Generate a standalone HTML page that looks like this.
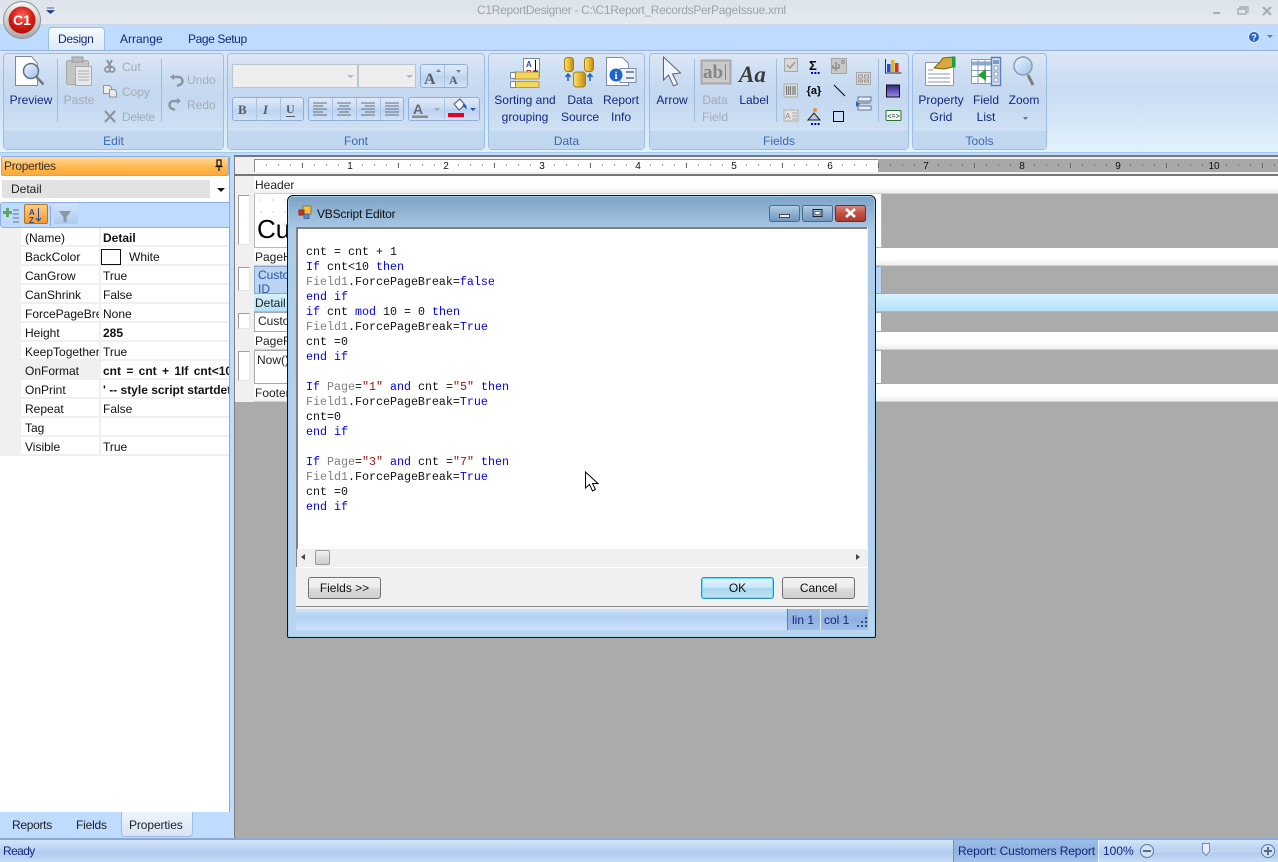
<!DOCTYPE html>
<html><head><meta charset="utf-8"><title>C1ReportDesigner</title>
<style>
html,body{margin:0;padding:0;width:1278px;height:862px;overflow:hidden;background:#ababab}
body{position:relative;font:12px/14px "Liberation Sans",sans-serif;color:#111}
div,svg,pre,span.a{box-sizing:border-box}
.b{position:absolute}
.t{position:absolute;white-space:nowrap;line-height:14px}
.c{position:absolute;white-space:nowrap;width:100px;text-align:center;line-height:14px;color:#15287a}
.d{color:#a3abb8}
.g{position:absolute;top:53px;height:97px;border:1px solid #9dbde4;border-radius:4px;background:linear-gradient(#dbe7f6 0,#cfdff3 18%,#c3d7f0 45%,#cfe0f3 80%)}
.g i{position:absolute;left:0;right:0;bottom:0;height:18px;background:#c0d7ef;color:#3f68ad;font-style:normal;text-align:center;line-height:20px}
.btn{position:absolute;border:1px solid #8eaed8;border-radius:3px;background:linear-gradient(#dfeafa,#c9dcf3 45%,#bcd2ee 55%,#d2e2f6)}
.sep{position:absolute;width:1px;background:#9fbbdd}
.row{position:absolute;left:0;width:229px;height:19px;border-bottom:2px solid #f0f0f0;background:#fff}
.row b,.row span{position:absolute;top:3px;white-space:nowrap;line-height:14px;font-weight:normal;color:#111}
.row .k{left:25px;width:74px;overflow:hidden}
.row .v{left:103px;width:126px;overflow:hidden}
.row b.v{font-weight:bold}
.row:before{content:"";position:absolute;left:0;top:0;width:21px;height:19px;background:#f0f0f0}
.row:after{content:"";position:absolute;left:99px;top:0;width:2px;height:19px;background:#f0f0f0}
.band{position:absolute;left:254px;right:0;height:18px;background:linear-gradient(#fff,#fff 60%,#efefef);border-bottom:1px solid #d0d0d0}
.band span{position:absolute;left:1px;top:2px;line-height:14px;color:#222}
.lb{position:absolute;left:238px;width:12px;background:#fff;border:1px solid #a0a0a0;border-right-color:#e8e8e8;border-bottom-color:#e8e8e8}
pre{position:absolute;margin:0;font:11.67px/15px "Liberation Mono",monospace;color:#111}
pre u{text-decoration:none;color:#0000ee}
pre s{text-decoration:none;color:#808080}
pre em{font-style:normal;color:#a31515}
.wb{position:absolute;top:577px;height:22px;width:73px;border:1px solid #707070;border-radius:3px;background:linear-gradient(#f4f4f4,#ebebeb 48%,#dcdcdc 52%,#cfcfcf);text-align:center;line-height:20px;color:#111}
</style></head><body>

<!-- title bar -->
<div class="b" style="left:0;top:0;width:1278px;height:25px;background:linear-gradient(#dde3ea,#e5eaf1);border-bottom:1px solid #cdd6e2"></div>
<div class="t" style="left:477px;top:3px;color:#9da3ac;letter-spacing:-.31px">C1ReportDesigner - C:\C1Report_RecordsPerPageIssue.xml</div>
<!-- tab row -->
<div class="b" style="left:0;top:25px;width:1278px;height:26px;background:#bfdbff"></div>
<div class="b" style="left:48px;top:27px;width:57px;height:24px;border:1px solid #9dbde4;border-bottom:0;border-radius:4px 4px 0 0;background:linear-gradient(#f7fbff,#dbe8f8)"></div>
<div class="t" style="left:58px;top:32px;color:#15287a;letter-spacing:-.3px">Design</div>
<div class="t" style="left:120px;top:32px;color:#15287a">Arrange</div>
<div class="t" style="left:188px;top:32px;color:#15287a;letter-spacing:-.4px">Page Setup</div>
<!-- ribbon -->
<div class="b" style="left:0;top:50px;width:1278px;height:103px;border-top:1px solid #8fb2e0;border-bottom:1px solid #a8c8e8;background:linear-gradient(#dbe7f7,#c9dcf3 35%,#cfe1f5 55%,#e2f2fd)"></div>
<div class="b" style="left:0;top:153px;width:1278px;height:3px;background:#bfdbff"></div>

<div class="g" style="left:3px;width:221px"><i>Edit</i></div>
<div class="g" style="left:227px;width:258px"><i>Font</i></div>
<div class="g" style="left:488px;width:157px"><i>Data</i></div>
<div class="g" style="left:649px;width:260px"><i>Fields</i></div>
<div class="g" style="left:912px;width:135px"><i>Tools</i></div>

<div class="sep" style="left:57px;top:59px;height:63px"></div>
<div class="sep" style="left:161px;top:59px;height:63px"></div>
<div class="sep" style="left:694px;top:59px;height:63px"></div>
<div class="sep" style="left:776px;top:59px;height:63px"></div>
<div class="sep" style="left:878px;top:59px;height:63px"></div>

<!-- font controls -->
<div class="b" style="left:232px;top:64px;width:126px;height:24px;background:#eeeeee;border:1px solid #bcc4cf"></div>
<div class="b" style="left:358px;top:64px;width:58px;height:24px;background:#eeeeee;border:1px solid #bcc4cf"></div>
<div class="btn" style="left:420px;top:64px;width:48px;height:24px"></div>
<div class="btn" style="left:232px;top:97px;width:72px;height:24px"></div>
<div class="btn" style="left:308px;top:97px;width:96px;height:24px"></div>
<div class="btn" style="left:408px;top:97px;width:72px;height:24px"></div>

<svg class="b" style="left:0;top:0" width="1278" height="156" viewBox="0 0 1278 156">
<defs>
<radialGradient id="rb" cx=".5" cy=".35" r=".7"><stop offset="0" stop-color="#f26a60"/><stop offset=".55" stop-color="#d91d14"/><stop offset="1" stop-color="#a30b08"/></radialGradient>
<linearGradient id="sil" x1="0" y1="0" x2="0" y2="1"><stop offset="0" stop-color="#f7f7f7"/><stop offset="1" stop-color="#a8a8ac"/></linearGradient>
<linearGradient id="gold" x1="0" y1="0" x2="1" y2="0"><stop offset="0" stop-color="#fbe27a"/><stop offset=".5" stop-color="#e8b92e"/><stop offset="1" stop-color="#b98616"/></linearGradient>
<linearGradient id="lens" x1="0" y1="0" x2="1" y2="1"><stop offset="0" stop-color="#eef6ff"/><stop offset="1" stop-color="#9cc0ea"/></linearGradient>
<linearGradient id="vio" x1="0" y1="0" x2="0" y2="1"><stop offset="0" stop-color="#2a2a78"/><stop offset=".55" stop-color="#6a5ac0"/><stop offset="1" stop-color="#a08ae0"/></linearGradient>
</defs>
<!-- app button -->
<circle cx="22" cy="20" r="18.5" fill="url(#sil)" stroke="#8d8f94"/>
<circle cx="22" cy="20" r="13.500" fill="url(#rb)"/>
<text x="22" y="25" font-family="Liberation Sans" font-weight="bold" font-size="14" fill="#fff" text-anchor="middle">C1</text>
<path d="M47 8h7M47 10.5h7l-3.500 3z" fill="#1f3f8a" stroke="#1f3f8a" stroke-width=".8"/>
<!-- window buttons -->
<path d="M1213 13h7" stroke="#a5adb8" stroke-width="2"/>
<path d="M1238 9h8v5h-8zM1240 9V7h8v5h-2" fill="none" stroke="#a5adb8" stroke-width="1.400"/>
<path d="M1263 7l8 8M1271 7l-8 8" stroke="#a5adb8" stroke-width="2.200"/>
<!-- help -->
<circle cx="1254" cy="37" r="5.500" fill="#2a62c8" stroke="#dfeaff"/><text x="1254" y="40.500" font-family="Liberation Sans" font-weight="bold" font-size="9" fill="#fff" text-anchor="middle">?</text>
<path d="M1267 35h6l-3 3z" fill="#5b7fb8"/>

<!-- preview -->
<path d="M15.500 56.500h16l6 7v22h-22z" fill="#fff" stroke="#7c8ba6"/>
<circle cx="31" cy="71" r="7.500" fill="url(#lens)" stroke="#66707f" stroke-width="1.500"/>
<path d="M36.500 77l7 7.500" stroke="#777" stroke-width="2.500"/>
<!-- paste -->
<rect x="66.500" y="60.500" width="22" height="24" rx="2" fill="#c4c4c4" stroke="#a8a8a8"/>
<rect x="72" y="57" width="11" height="5" fill="#bbb" stroke="#9d9d9d"/>
<path d="M75.500 66.500h16v19h-16z" fill="#e8e8e8" stroke="#aaa"/>
<path d="M78 71h11M78 74h11M78 77h11M78 80h11" stroke="#aaa"/>
<!-- cut copy delete -->
<path d="M107 60l4 7M112 60l-4 7" stroke="#8d949e" stroke-width="2"/><circle cx="107.500" cy="69.500" r="2.500" fill="none" stroke="#8d949e" stroke-width="1.800"/><circle cx="112" cy="69.500" r="2.500" fill="none" stroke="#8d949e" stroke-width="1.800"/>
<path d="M103.500 85.500h6l2 2v6h-8z" fill="#eee" stroke="#8d949e"/><path d="M109.500 89.500h5l2 2v5.500h-7z" fill="#e8e8e8" stroke="#8d949e"/>
<path d="M105 111l10 11M115 111l-10 11" stroke="#8d949e" stroke-width="2.200"/>
<!-- undo redo -->
<path d="M172 77h6a4 4 0 0 1 1 8l-2 1" fill="none" stroke="#8d949e" stroke-width="2.400"/><path d="M170 77l4-3v6z" fill="#8d949e"/>
<path d="M179 101h-5a4 4 0 0 0-1 8l2 1" fill="none" stroke="#8d949e" stroke-width="2.400"/><path d="M181 101l-4-3v6z" fill="#8d949e"/>
<!-- combos arrows -->
<path d="M347 75h7l-3.500 3zM406 75h7l-3.500 3z" fill="#b4b8be"/>
<!-- grow/shrink font, b i u -->
<text x="424" y="84" font-family="Liberation Serif" font-weight="bold" font-size="16" fill="#566070">A</text><path d="M436 72h5l-2.500-3z" fill="#7a8494"/>
<text x="449" y="84" font-family="Liberation Serif" font-weight="bold" font-size="12" fill="#566070">A</text><path d="M456 70h5l-2.500 3z" fill="#7a8494"/>
<line x1="444.500" y1="65" x2="444.500" y2="87" stroke="#a8c2e2"/>
<text x="238" y="114" font-family="Liberation Serif" font-weight="bold" font-size="13" fill="#555e6c">B</text>
<text x="263" y="114" font-family="Liberation Serif" font-weight="bold" font-style="italic" font-size="13" fill="#555e6c">I</text>
<text x="286" y="113" font-family="Liberation Serif" font-weight="bold" font-size="12" fill="#555e6c">U</text><path d="M286 116.500h9" stroke="#555e6c"/>
<path d="M256.500 98v22M280.500 98v22M332.500 98v22M356.500 98v22M380.500 98v22" stroke="#a8c2e2"/>
<path d="M313 103h14M313 106h10M313 109h14M313 112h10M313 115h14" stroke="#656d7a"/>
<path d="M337 103h14M339 106h10M337 109h14M339 112h10M337 115h14" stroke="#656d7a"/>
<path d="M361 103h14M365 106h10M361 109h14M365 112h10M361 115h14" stroke="#656d7a"/>
<path d="M385 103h14M385 106h14M385 109h14M385 112h14M385 115h14" stroke="#656d7a"/>
<text x="413" y="114" font-family="Liberation Sans" font-weight="bold" font-size="14" fill="#646c78">A</text><path d="M412 115.500h16v2.500h-16z" fill="#8c8c8c"/><path d="M434 108h6l-3 3z" fill="#a0a8b4"/>
<path d="M444.500 97v22" stroke="#a8c2e2"/>
<path d="M454 104l6-5 5 6-6 5z" fill="#f4f7fb" stroke="#4a5568"/><path d="M463 104c3 0 4 2 3.500 6-1-2-2-3-4-3z" fill="#2860c0"/><rect x="448" y="113" width="16" height="4" fill="#e8002a"/><path d="M470 108h6l-3 3z" fill="#2a5aa8"/>

<!-- sorting -->
<path d="M523.500 58.500h16v18h-16z" fill="#fff" stroke="#7a8eb0"/>
<text x="526" y="67" font-family="Liberation Sans" font-size="8" font-weight="bold" fill="#2a4a9a">A</text><text x="526" y="76" font-family="Liberation Sans" font-size="8" font-weight="bold" fill="#a02020">R</text>
<path d="M535.500 60v13M533.500 71l2 3 2-3z" stroke="#111" fill="#111"/>
<rect x="514" y="72" width="25" height="7" fill="#f5d65c" stroke="#b99b3b"/><rect x="514" y="81.500" width="25" height="6" fill="#f5d65c" stroke="#b99b3b"/>
<path d="M510.500 72.500h5v6h-5zM510.500 81.500h5v6h-5z" fill="#fff" stroke="#6e88b0"/>
<!-- data source -->
<rect x="564.500" y="57.500" width="9" height="14" rx="3" fill="url(#gold)" stroke="#a97d18"/>
<rect x="584.500" y="57.500" width="9" height="14" rx="3" fill="url(#gold)" stroke="#a97d18"/>
<rect x="573.500" y="72" width="12" height="15" rx="3" fill="url(#gold)" stroke="#a97d18"/>
<path d="M568 81v-6M565.500 77l2.500-3 2.500 3M590 81v-6M587.500 77l2.500-3 2.500 3" stroke="#2a62b8" stroke-width="1.600" fill="none"/>
<!-- report info -->
<path d="M606.500 57.500h16l6 6v22h-22z" fill="#fff" stroke="#7a8eb0"/>
<rect x="620" y="68.500" width="16" height="14" fill="#eef3fa" stroke="#7a8eb0"/><path d="M626 72h8M626 78h8" stroke="#7a8eb0" stroke-width="2"/>
<circle cx="616" cy="75" r="6.500" fill="#1a66d0"/><text x="616" y="79" font-family="Liberation Serif" font-weight="bold" font-size="11" fill="#fff" text-anchor="middle">i</text>
<!-- arrow -->
<path d="M663.500 57v23l5-5 5 11 4-2-5-10 8-1z" fill="#f1f5fb" stroke="#596270"/>
<!-- ab| -->
<rect x="701.500" y="60.500" width="29" height="23" fill="#c9c9c9" stroke="#a9a9a9" stroke-width="2"/>
<text x="703" y="78" font-family="Liberation Serif" font-weight="bold" font-size="19" fill="#858585">ab</text><path d="M725.500 64v16" stroke="#858585"/>
<text x="739" y="82" font-family="Liberation Serif" font-style="italic" font-weight="bold" font-size="23" fill="#3d3d3d">Aa</text>
<!-- small icons -->
<rect x="784.500" y="58.500" width="13" height="13" fill="#d8d8d8" stroke="#a8a8a8"/><path d="M787 65l3 3 5-6" fill="none" stroke="#9a9a9a" stroke-width="1.500"/>
<text x="809" y="70" font-family="Liberation Sans" font-weight="bold" font-size="13" fill="#000">Σ</text><path d="M811 73h9" stroke="#0000c0" stroke-dasharray="2 1.300" stroke-width="2"/>
<rect x="831.500" y="58.500" width="15" height="15" fill="#c7c7c7" stroke="#a5a5a5"/><path d="M836 71v-9M833 65v3h6v-4" fill="none" stroke="#8b8b8b" stroke-width="1.500"/><circle cx="843" cy="62" r="1.500" fill="none" stroke="#8b8b8b"/>
<rect x="856.500" y="72.500" width="14" height="12" fill="#d8d8d8" stroke="#a8a8a8"/><path d="M858.500 75h4v3h-4zM864.500 75h4v3h-4zM858.500 80h4v2h-4zM864.500 80h4v2h-4z" fill="none" stroke="#999"/>
<rect x="784" y="84" width="13.500" height="13" rx="1" fill="#e0e0e0" stroke="#a8a8a8"/><path d="M786.500 86v9M788.500 86v9M790.500 86v9M793 86v9M795 86v9" stroke="#777" stroke-width="1.200"/>
<text x="814" y="94" font-family="Liberation Sans" font-weight="bold" font-size="11" fill="#000" text-anchor="middle">{a}</text>
<path d="M834 85l11 11" stroke="#000"/>
<rect x="784" y="110" width="14" height="11" fill="#e2e2e2" stroke="#b0b0b0"/><text x="785" y="119" font-family="Liberation Sans" font-size="8" fill="#888">A</text><path d="M792 113h5M792 116h5M792 119h5" stroke="#aaa"/>
<path d="M808 120l6-7 6 7z" fill="#b6c8e4" stroke="#222"/><circle cx="815" cy="110" r="2" fill="#e89040"/><path d="M811 124h9" stroke="#0000c0" stroke-dasharray="2 1.300" stroke-width="2"/>
<rect x="833.500" y="111.500" width="10" height="10" fill="none" stroke="#000"/>
<path d="M858 97h13v4h-13zM858 106h13v4h-13z" fill="#e8eef8" stroke="#67748a"/><path d="M856 101l4 3-4 3z" fill="#2a62b8"/><path d="M858.500 103h12" stroke="#67748a"/>
<path d="M885.500 59v14h16" fill="none" stroke="#333"/><rect x="887" y="64" width="3.500" height="8" fill="#2050c8"/><rect x="891" y="60" width="3.500" height="12" fill="#e8b020"/><rect x="895" y="63" width="3.500" height="9" fill="#d83020"/>
<rect x="886.500" y="85" width="13" height="12" fill="url(#vio)" stroke="#111"/>
<rect x="886" y="110.500" width="15" height="10" rx="1" fill="#eef7ee" stroke="#2f6f2f"/><text x="893.500" y="118.500" font-family="Liberation Mono" font-size="7" fill="#224" text-anchor="middle">&lt;=&gt;</text>
<!-- property grid -->
<path d="M925.500 62.500h28v23h-28z" fill="#fdfdfd" stroke="#8a9ab2"/><path d="M928 70h5M928 74h22M928 78h22M928 82h22" stroke="#8a9ab2"/>
<path d="M934 68l6-6 3-4 10-1v10l-9 2z" fill="#d8a83a" stroke="#7e5c12"/><rect x="952" y="56.500" width="3.500" height="11" fill="#18a040"/>
<!-- field list -->
<rect x="971.500" y="59.500" width="20" height="24" fill="#fff" stroke="#8a9ab2"/><path d="M971 63.500h20" stroke="#8faad0" stroke-width="4"/><path d="M971.500 70.500h20M971.500 76.500h20M978 60v24M985 60v24" stroke="#8a9ab2"/>
<rect x="991.500" y="57.500" width="9" height="28" fill="#d8e6f8" stroke="#5a80c0" stroke-width="1.500"/><rect x="993" y="60" width="6" height="4" fill="#7f9bc4"/><path d="M994 66h4v4h-4zM994 72h4v4h-4zM994 78h4v4h-4z" fill="#fff" stroke="#8a9ab2"/>
<path d="M986 69v12l-8-6z" fill="#18a830"/>
<!-- zoom -->
<circle cx="1023" cy="66" r="9" fill="url(#lens)" stroke="#8d9bad" stroke-width="1.500"/><path d="M1028 75l5 10" stroke="#7d7d7d" stroke-width="3"/>
<path d="M1023 117h5l-2.500 3z" fill="#5a76a8"/>
</svg>

<!-- ribbon labels -->
<div class="c" style="left:-19px;top:93px">Preview</div>
<div class="c d" style="left:29px;top:93px">Paste</div>
<div class="t d" style="left:122px;top:60px">Cut</div>
<div class="t d" style="left:122px;top:85px">Copy</div>
<div class="t d" style="left:122px;top:110px;letter-spacing:-.3px">Delete</div>
<div class="t d" style="left:187px;top:73px">Undo</div>
<div class="t d" style="left:187px;top:98px">Redo</div>
<div class="c" style="left:475px;top:93px">Sorting and</div>
<div class="c" style="left:475px;top:110px">grouping</div>
<div class="c" style="left:530px;top:93px">Data</div>
<div class="c" style="left:530px;top:110px">Source</div>
<div class="c" style="left:571px;top:93px">Report</div>
<div class="c" style="left:571px;top:110px">Info</div>
<div class="c" style="left:622px;top:93px">Arrow</div>
<div class="c d" style="left:665px;top:93px">Data</div>
<div class="c d" style="left:665px;top:110px">Field</div>
<div class="c" style="left:704px;top:93px">Label</div>
<div class="c" style="left:891px;top:93px">Property</div>
<div class="c" style="left:891px;top:110px">Grid</div>
<div class="c" style="left:936px;top:93px">Field</div>
<div class="c" style="left:936px;top:110px">List</div>
<div class="c" style="left:974px;top:93px">Zoom</div>

<!-- design area -->
<div class="b" style="left:234px;top:155px;width:1044px;height:683px;background:#ababab;border-left:1px solid #7f7f7f;border-top:2px solid #777"></div>
<div class="b" style="left:235px;top:157px;width:1043px;height:17px;background:#f0f0f0"></div>
<div class="b" style="left:235px;top:157px;width:19px;height:245px;background:#f0f0f0"></div>
<div class="b" style="left:254px;top:159px;width:624px;height:13px;background:#fff;border:1px solid #8c8c8c;border-right:0;border-bottom:0"></div>
<div class="b" style="left:878px;top:159px;width:400px;height:13px;background:#a8a8a8"></div>
<div class="b" style="left:234px;top:174px;width:1044px;height:2px;background:#757575"></div>
<svg class="b" style="left:254px;top:159px" width="1024" height="14" viewBox="0 0 1024 14">
<defs><pattern id="ru" x="0" y="0" width="96" height="14" patternUnits="userSpaceOnUse">
<path d="M12 6h1M24 6h1M36 6h1M60 6h1M72 6h1M84 6h1" stroke="#444"/><path d="M48.500 4v5" stroke="#666"/></pattern></defs>
<rect width="1024" height="14" fill="url(#ru)"/>
<g font-family="Liberation Sans" font-size="10" fill="#111" text-anchor="middle">
<text x="96" y="10">1</text><text x="192" y="10">2</text><text x="288" y="10">3</text><text x="384" y="10">4</text><text x="480" y="10">5</text><text x="576" y="10">6</text><text x="672" y="10">7</text><text x="768" y="10">8</text><text x="864" y="10">9</text><text x="960" y="10">10</text></g>
</svg>

<div class="band" style="top:176px"><span>Header</span></div>
<div class="b" style="left:254px;top:194px;width:628px;height:54px;background:#fff;border:1px solid #b8b8b8;border-top:0;background-image:radial-gradient(#e2e2e2 1px,transparent 1px);background-size:12px 12px"></div>
<div class="t" style="left:257px;top:214px;font-size:26px;line-height:30px;color:#000">Cu</div>
<div class="lb" style="top:195px;height:50px"></div>
<div class="band" style="top:248px"><span>PageH</span></div>
<div class="b" style="left:254px;top:266px;width:628px;height:28px;background:#bcd4f4;border:1px solid #8aa6cc;overflow:hidden"><div class="t" style="left:3px;top:1px;color:#2a55a0">Custo<br>ID</div></div>
<div class="lb" style="top:267px;height:24px"></div>
<div class="band" style="top:294px;background:linear-gradient(#d8f1ff,#b4e2fb);border-bottom:1px solid #8cc4e8"><span>Detail</span></div>
<div class="b" style="left:254px;top:312px;width:628px;height:20px;background:#fff;border:1px solid #a8a8a8"><div class="t" style="left:3px;top:1px;color:#222">Custo</div></div>
<div class="lb" style="top:313px;height:16px"></div>
<div class="band" style="top:332px"><span>PageF</span></div>
<div class="b" style="left:254px;top:350px;width:628px;height:34px;background:#fff;border:1px solid #a8a8a8"><div class="t" style="left:2px;top:2px;color:#222">Now()</div></div>
<div class="lb" style="top:351px;height:30px"></div>
<div class="band" style="top:384px;height:18px"><span>Footer</span></div>

<!-- left panel -->
<div class="b" style="left:0;top:156px;width:230px;height:682px;background:#fff;border-right:1px solid #8fa8c8"></div>
<div class="b" style="left:230px;top:156px;width:4px;height:682px;background:#bfdbff"></div>
<div class="b" style="left:1px;top:156px;width:228px;height:20px;border:1px solid #8eb0e0;border-radius:2px;background:linear-gradient(#ffd9a0,#ffb94f 55%,#fba93a)"></div>
<div class="t" style="left:4px;top:159px;color:#333;letter-spacing:-.3px">Properties</div>
<svg class="b" style="left:214px;top:159px" width="10" height="13"><path d="M3 1h4v6H3zM1.500 7.500h7M5 8v4" fill="none" stroke="#111" stroke-width="1.200"/></svg>
<div class="b" style="left:2px;top:180px;width:208px;height:18px;background:#e2e2e2"></div>
<div class="t" style="left:11px;top:182px;color:#222">Detail</div>
<svg class="b" style="left:217px;top:187px" width="10" height="6"><path d="M0 1h8L4 5z" fill="#111"/></svg>
<div class="b" style="left:0;top:202px;width:230px;height:26px;background:#bfdbff;border:1px solid #8eb0e0;border-radius:3px 0 0 3px"></div>
<div class="b" style="left:54px;top:204px;width:24px;height:20px;background:linear-gradient(#cfe2fb,#aecbf0)"></div>
<div class="b" style="left:24px;top:204px;width:24px;height:20px;background:linear-gradient(#ffcb80,#f79a2a);border:1px solid #a87a30;border-radius:2px"></div>
<svg class="b" style="left:0;top:202px" width="90" height="26">
<path d="M6 6h3v3h3v3H9v3H6v-3H3V9h3z" fill="#62a862"/><path d="M13 8h6M13 12h6M13 16h6M13 20h6" stroke="#657080"/>
<text x="29" y="13" font-family="Liberation Sans" font-size="8" font-weight="bold" fill="#2a4a9a">A</text><text x="29" y="21" font-family="Liberation Sans" font-size="8" font-weight="bold" fill="#2a4a9a">Z</text>
<path d="M38.500 6v13M36 16l2.500 3 2.500-3" stroke="#2a4a9a" fill="none"/>
<path d="M50.500 4v20" stroke="#8fa8c8"/>
<path d="M59 9h12l-4.500 6v5h-3v-5z" fill="#8f969f"/>
</svg>

<div class="row" style="top:228px"><span class="k">(Name)</span><b class="v">Detail</b></div>
<div class="row" style="top:247px"><span class="k">BackColor</span><span style="left:129px">White</span><div class="b" style="left:101px;top:2px;width:20px;height:16px;border:1px solid #111;background:#fff"></div></div>
<div class="row" style="top:266px"><span class="k">CanGrow</span><span class="v">True</span></div>
<div class="row" style="top:285px"><span class="k">CanShrink</span><span class="v">False</span></div>
<div class="row" style="top:304px"><span class="k">ForcePageBreak</span><span class="v">None</span></div>
<div class="row" style="top:323px"><span class="k">Height</span><b class="v">285</b></div>
<div class="row" style="top:342px"><span class="k">KeepTogether</span><span class="v">True</span></div>
<div class="row" style="top:361px"><div class="b" style="left:21px;top:0;width:78px;height:17px;background:#f0f0f0"></div><span class="k">OnFormat</span><b class="v" style="word-spacing:2px">cnt = cnt + 1If cnt&lt;10</b></div>
<div class="row" style="top:380px"><span class="k">OnPrint</span><b class="v">' -- style script startdetail</b></div>
<div class="row" style="top:399px"><span class="k">Repeat</span><span class="v">False</span></div>
<div class="row" style="top:418px"><span class="k">Tag</span></div>
<div class="row" style="top:437px"><span class="k">Visible</span><span class="v">True</span></div>

<!-- bottom tabs -->
<div class="b" style="left:0;top:812px;width:230px;height:27px;background:#bfdbff"></div>
<div class="b" style="left:121px;top:812px;width:72px;height:25px;border:1px solid #9dbde4;border-top:0;border-radius:0 0 4px 4px;background:linear-gradient(#eef4fc,#d5e4f7)"></div>
<div class="t" style="left:12px;top:818px;color:#222;letter-spacing:-.3px">Reports</div>
<div class="t" style="left:76px;top:818px;color:#222;letter-spacing:-.2px">Fields</div>
<div class="t" style="left:129px;top:818px;color:#222;letter-spacing:-.1px">Properties</div>

<!-- status bar -->
<div class="b" style="left:0;top:838px;width:1278px;height:2px;background:#8aa8d0"></div>
<div class="b" style="left:0;top:840px;width:1278px;height:22px;background:linear-gradient(#d4e4f9,#b8d2f3 45%,#b2cdf0 60%,#c8dcf6)"></div>
<div class="t" style="left:3px;top:844px;color:#15287a;letter-spacing:-.6px">Ready</div>
<div class="b" style="left:953px;top:840px;width:146px;height:22px;background:linear-gradient(#9dbee9,#8fb0e0 50%,#a5c3ec);border-left:1px solid #6e8fbe;border-right:1px solid #e6f0fb"></div>
<div class="t" style="left:958px;top:844px;color:#15287a;letter-spacing:-.13px">Report: Customers Report</div>
<div class="t" style="left:1103px;top:844px;color:#15287a">100%</div>
<svg class="b" style="left:1135px;top:840px" width="143" height="22">
<path d="M12 11h120" stroke="#eef5fe" stroke-width="1.500"/><path d="M12 11h120" stroke="#7f9cc8" stroke-width=".5"/>
<path d="M17.500 7v8M127.500 7v8" stroke="#eef5fe"/>
<circle cx="12" cy="11" r="6.500" fill="#d5e2f4" stroke="#587aa8"/><path d="M8 11h8" stroke="#566a8c" stroke-width="2"/>
<circle cx="133" cy="11" r="6.500" fill="#d5e2f4" stroke="#587aa8"/><path d="M129 11h8M133 7v8" stroke="#566a8c" stroke-width="2"/>
<path d="M67.500 3.500h7v8l-3.500 4-3.500-4z" fill="#e6eefa" stroke="#6f8cb8"/>
</svg>

<!-- dialog -->
<div class="b" style="left:287px;top:195px;width:589px;height:443px;border:1px solid #111;border-radius:6px 6px 2px 2px;background:linear-gradient(#7da2c6,#aecbe8 8%,#b9d5ef);box-shadow:inset 0 0 0 1px #9fd0ee"></div>
<svg class="b" style="left:298px;top:205px" width="16" height="16">
<rect x="5" y="1" width="8" height="8" fill="#f2c04a" stroke="#9a7a2c"/><rect x="1" y="5" width="5" height="5" fill="#c83020" stroke="#8a3020"/><rect x="6" y="9.500" width="5" height="4" fill="#5a8ad8" stroke="#4a6a9a"/>
</svg>
<div class="t" style="left:317px;top:207px;color:#111;letter-spacing:-.2px">VBScript Editor</div>
<svg class="b" style="left:769px;top:205px" width="98" height="18">
<defs><linearGradient id="wb" x1="0" y1="0" x2="0" y2="1"><stop offset="0" stop-color="#b5cde6"/><stop offset=".5" stop-color="#8fb0d2"/><stop offset="1" stop-color="#6f95bd"/></linearGradient>
<linearGradient id="wr" x1="0" y1="0" x2="0" y2="1"><stop offset="0" stop-color="#d8867c"/><stop offset=".5" stop-color="#c24f42"/><stop offset="1" stop-color="#a83a30"/></linearGradient></defs>
<rect x=".5" y=".5" width="30" height="16" rx="2" fill="url(#wb)" stroke="#4f6a88"/>
<rect x="33.500" y=".5" width="30" height="16" rx="2" fill="url(#wb)" stroke="#4f6a88"/>
<rect x="66.500" y=".5" width="30" height="16" rx="2" fill="url(#wr)" stroke="#6a3030"/>
<rect x="10.500" y="9.500" width="10" height="3" fill="#eee" stroke="#445"/>
<rect x="44" y="4.500" width="9" height="7" fill="none" stroke="#223" stroke-width="1"/><rect x="46" y="6.500" width="5" height="3" fill="#fff" stroke="#223" stroke-width=".5"/>
<path d="M77 4l9 8M86 4l-9 8" stroke="#fff" stroke-width="2.600"/>
</svg>

<div class="b" style="left:296px;top:227px;width:572px;height:403px;background:#f0f0f0"></div>
<div class="b" style="left:296px;top:227px;width:571px;height:323px;background:#fff;border-left:2px solid #808080;border-top:2px solid #808080"></div>
<pre style="left:306px;top:245px">cnt = cnt + 1
<u>If</u> cnt&lt;10 <u>then</u>
<s>Field1</s>.ForcePageBreak=<u>false</u>
<u>end if</u>
<u>if</u> cnt <u>mod</u> 10 = 0 <u>then</u>
<s>Field1</s>.ForcePageBreak=<u>True</u>
cnt =0
<u>end if</u>

<u>If</u> <s>Page</s>=<em>"1"</em> <u>and</u> cnt =<em>"5"</em> <u>then</u>
<s>Field1</s>.ForcePageBreak=<u>True</u>
cnt=0
<u>end if</u>

<u>If</u> <s>Page</s>=<em>"3"</em> <u>and</u> cnt =<em>"7"</em> <u>then</u>
<s>Field1</s>.ForcePageBreak=<u>True</u>
cnt =0
<u>end if</u></pre>
<div class="b" style="left:296px;top:549px;width:571px;height:18px;background:#f0f0f0;border-left:1px solid #808080"></div>
<div class="b" style="left:315px;top:550px;width:15px;height:15px;border:1px solid #9a9a9a;border-radius:2px;background:linear-gradient(#f4f4f4,#dcdcdc 50%,#cfcfcf)"></div>
<svg class="b" style="left:300px;top:552px" width="562" height="10"><path d="M5 2v6L1 5zM556 2v6l4-3z" fill="#444"/></svg>
<div class="b" style="left:296px;top:567px;width:572px;height:1px;background:#fff"></div>
<div class="wb" style="left:308px">Fields &gt;&gt;</div>
<div class="wb" style="left:701px;border-color:#2f8fc4;box-shadow:inset 0 0 0 1px #6cdcff;background:linear-gradient(#e4f4fb,#c9e7f6 48%,#a9d6ee 52%,#c2e4f5)">OK</div>
<div class="wb" style="left:782px">Cancel</div>
<div class="b" style="left:296px;top:606px;width:572px;height:1px;background:#8a8a8a"></div>
<div class="b" style="left:296px;top:607px;width:572px;height:2px;background:#f0f0f0"></div>
<div class="b" style="left:296px;top:609px;width:572px;height:21px;background:linear-gradient(#cfe2f9,#b2cff3 40%,#bfd8f7 70%,#cfe2f9)"></div>
<div class="b" style="left:787px;top:609px;width:81px;height:21px;background:linear-gradient(#9dbde8,#8fafe0 50%,#a0bfea);border-left:1px solid #5f7fb0"></div>
<div class="b" style="left:820px;top:609px;width:1px;height:21px;background:#e0ecfb"></div>
<div class="t" style="left:792px;top:613px;color:#15287a">lin 1</div>
<div class="t" style="left:824px;top:613px;color:#15287a">col 1</div>
<svg class="b" style="left:856px;top:616px" width="12" height="12"><path d="M9 1h2v2H9zM5 5h2v2H5zM9 5h2v2H9zM1 9h2v2H1zM5 9h2v2H5zM9 9h2v2H9z" fill="#2f4f86"/></svg>

<!-- cursor -->
<svg class="b" style="left:584px;top:471px" width="16" height="22"><path d="M1.500 1v16l4-3.500 3 6.500 3-1.500-3-6h5.500z" fill="#fff" stroke="#000"/></svg>
</body></html>
